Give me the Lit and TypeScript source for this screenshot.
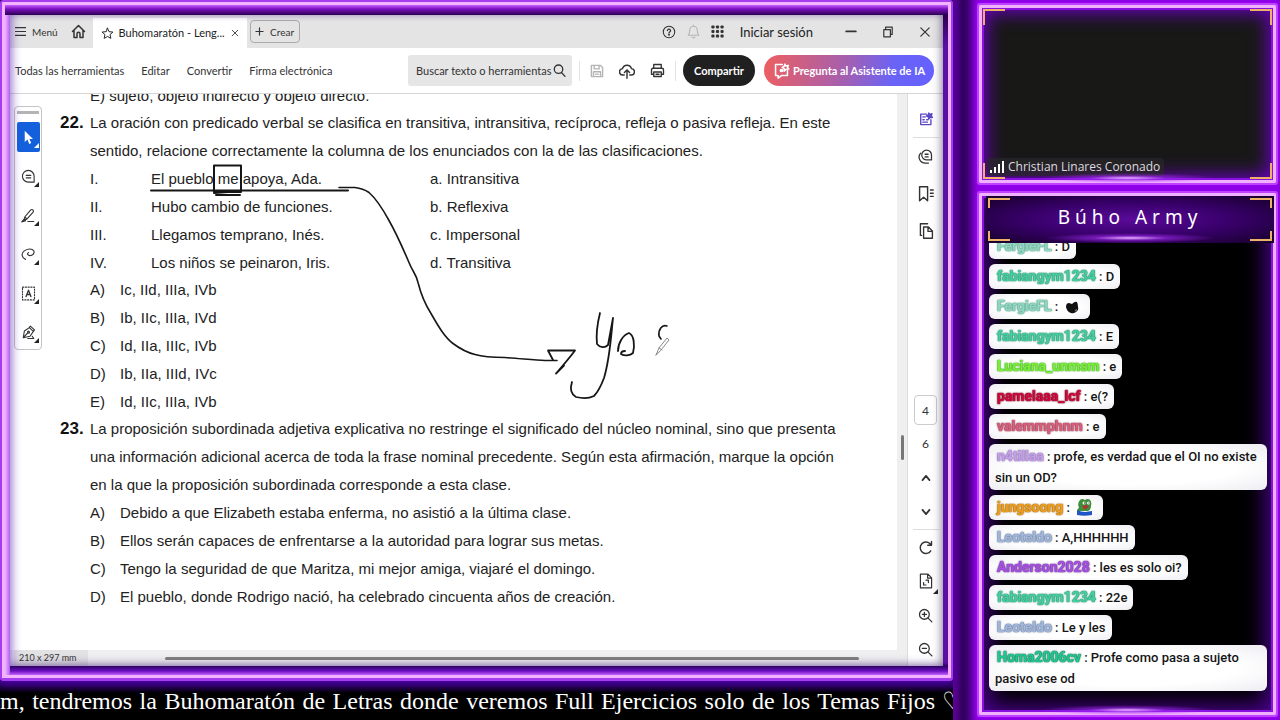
import { LitElement, html, css, svg, nothing } from "lit";
import { customElement } from "lit/decorators.js";
import { styleMap } from "lit/directives/style-map.js";

const icon = (size: number, body: unknown, sw = 1.5) => html`<svg
  width=${size} height=${size} viewBox="0 0 20 20" fill="none" stroke="currentColor"
  stroke-width=${sw} stroke-linecap="round" stroke-linejoin="round" aria-hidden="true">${body}</svg>`;

const I = {
  menu: svg`<path d="M0 3h20M0 10h20M0 17h20" stroke-width="2.200"/>`,
  home: svg`<path d="M2 10 10 2l8 8M4 8.500V18h4v-5a2 2 0 0 1 4 0v5h4V8.500" stroke-width="2"/>`,
  star: svg`<path d="m10 1.800 2.400 5.400 5.900.6-4.400 3.900 1.300 5.800L10 14.500l-5.200 3 1.300-5.800L1.700 7.800l5.900-.6z"/>`,
  plus: svg`<path d="M10 2v16M2 10h16" stroke-width="2.600"/>`,
  help: svg`<circle cx="10" cy="10" r="8.200"/><path d="M7.800 8a2.200 2.200 0 1 1 3.200 2c-.8.4-1 .8-1 1.600" stroke-width="1.800"/><circle cx="10" cy="14" r=".6" fill="currentColor"/>`,
  bell: svg`<path d="M3 15c2-2 2-3 2-7a5 5 0 0 1 10 0c0 4 0 5 2 7zM8 17.500c.6 1.400 3.400 1.400 4 0M10 1.500V3"/>`,
  apps: svg`${[3, 10, 17].map((x) => [3, 10, 17].map((y) => svg`<rect x=${x - 2.4} y=${y - 2.4} width="4.800" height="4.800" rx="1.500" fill="currentColor"/>`))}`,
  min: svg`<path d="M2 9h16" stroke-width="3"/>`,
  restore: svg`<path d="M3 6h11v12H3zM6 6V2h11v12h-3" stroke-width="2"/>`,
  close: svg`<path d="m3 3 14 14M17 3 3 17" stroke-width="2"/>`,
  search: svg`<circle cx="8.500" cy="8" r="6.500"/><path d="m13 13 5.500 6"/>`,
  save: svg`<path d="M2 2h13l3 3v13H2zM6 2v5h7V2M5 18v-7h10v7M8 14.500h4"/>`,
  upload: svg`<path d="M6.500 15H5a4 4 0 0 1-.6-8A5.800 5.800 0 0 1 15.600 7 4 4 0 0 1 15 15h-1.500M10 19V9M6.800 12 10 8.600l3.200 3.400"/>`,
  print: svg`<path d="M5 7V2h10v5M5 15H2V9q0-2 2-2h12q2 0 2 2v6h-3M5 12h10v6H5zM8 15h4"/>`,
  ai: svg`<path d="M11 3H3v13h3v3l4-3h7V10M9 9.500v1.500M13 9.500v1.500M14 2.500l1.200 2.300 2.800-.8-1 2.600 1.600 1.600-3.200.2-1.600 2-.8-2.800-2.200-1.200 2.400-1.400z"/><circle cx="10" cy="10" r="1.300" fill="currentColor"/>`,
  cursor: svg`<path d="M5 1v15l3.600-3.200L11 18.500l2.600-1.200-2.400-5.300H16z" fill="currentColor" stroke="none"/>`,
  comment: svg`<path d="M17.500 17.500H10A7.800 7.800 0 1 1 17.500 10zM7 8.500h6M7 11.800h6"/>`,
  marker: svg`<path d="m5 12 8-9.500q1.500-1 3 .2 1.200 1.300.2 2.800l-8.400 9.200zM5 12l-1 4.500 4-2M9 18h8"/><path d="M1 18.500 4 15l2 2z" fill="currentColor"/>`,
  lasso: svg`<path d="M6 16.500C1 14.500 0 9 4 5.500 8 2 15 1.500 17 5c1.500 3-1.500 6.500-5 6.500-3 0-4.500-2.500-2-4"/>`,
  text: svg`<rect x="2" y="1.500" width="16" height="17" stroke-dasharray="1.500 2.200"/><path d="m6.800 14 3.200-8.500L13.200 14M8 11.300h4" stroke-width="1.800"/>`,
  pen: svg`<path d="m3 17 1.500-9L11 3.500l5.500 5L12 15zM3 17l6-6.500M11 3.500l1.500-2 5.500 5-1.500 2M9 18h8l-2-3"/><circle cx="10" cy="9.500" r="1.300"/>`,
  summary: svg`<path d="M11 3H2.500v15H17v-7M5.500 7H9M5.500 11h2M11 11h2M5.500 14.500H12"/><path d="m14 1.500 1.400 2 3.100-1-1 3 1.600 2.300-3.200.2-2 2-.7-3-2.500-1.500 2.700-1.500z" fill="currentColor"/>`,
  comments: svg`<path d="M18 14.500H12A6.500 6.500 0 1 1 18 8zM9.500 7h4M9.500 10.500h4M3.500 5.500A8 8 0 0 0 9.500 18.800H14"/>`,
  bookmark: svg`<path d="M2 1h10v17.500l-5-4.500-5 4.500zM15.500 5H19M15.500 9H19M15.500 13H19" stroke-width="1.800"/>`,
  pages: svg`<path d="M4.500 15.500H3V1h9M7 5h6l5 5v9H7zM12.500 5v5.500H18" stroke-width="1.700"/>`,
  up: svg`<path d="m5 13 5-6 5 6" stroke-width="2.600"/>`,
  down: svg`<path d="m5 7 5 6 5-6" stroke-width="2.600"/>`,
  rotate: svg`<path d="M17 14.500A7.600 7.600 0 1 1 16 5l1.500 1.500M18 2v5h-5" stroke-width="1.900"/>`,
  fit: svg`<path d="M3 1.500h9.500L17 6v12.500H3zM12 2v4.500h4.500M7 15v-3M7 15h3M13 9v3M13 9h-3"/>`,
  zin: svg`<circle cx="8.500" cy="8.500" r="6.500"/><path d="m13.500 13.500 5 5M5.800 8.500h5.400M8.500 5.800v5.400"/>`,
  zout: svg`<circle cx="8.500" cy="8.500" r="6.500"/><path d="m13.500 13.500 5 5M5.800 8.500h5.400"/>`,
};

const ui = css`Lato, "Liberation Sans", sans-serif`;

@customElement("pdf-reader")
class PdfReader extends LitElement {
  static styles = css`
    :host { display: flex; flex-direction: column; min-height: 0; position: relative; background: #fff; color: #333; font: 11px/16px ${ui}; }
    :host::after { content: ""; position: absolute; inset: 0; pointer-events: none; box-shadow: inset 5px 0 8px -2px rgba(110, 60, 190, .55), inset -5px 0 8px -3px rgba(60, 40, 90, .5), inset 0 -7px 8px -4px rgba(60, 30, 100, .3); }
    button { font: inherit; color: inherit; background: none; border: 0; padding: 0; display: flex; align-items: center; justify-content: center; flex: none; white-space: nowrap; }
    svg { display: block; flex: none; }
    .tabs { display: flex; align-items: center; height: 33px; background: #e4e4e4; flex: none; }
    .menu { gap: 6px; padding-left: 5px; font-size: 10px; }
    .home { padding: 0 7px 0 13px; }
    .tab { display: flex; align-items: center; align-self: flex-end; height: 30px; width: 154px; background: #fff; box-sizing: border-box; padding: 0 8px; gap: 5px; color: #222; }
    .tab .name { flex: 1; white-space: nowrap; overflow: hidden; }
    .create { margin-left: 3px; border: 1px solid #aaa; border-radius: 4px; height: 23px; width: 50px; gap: 6px; font-size: 10px; }
    .win { margin-left: auto; display: flex; align-items: center; padding-right: 12px; color: #333; }
    .win .sign { font-size: 13px; color: #222; margin: 0 32px 0 16px; }
    .gap { margin-right: 10px; }
    .wide { margin-right: 25px; }
    .faint { color: #b4b4b4; }
    .bar { display: flex; align-items: center; height: 46px; box-sizing: border-box; padding: 0 9px 0 5px; border-bottom: 1px solid #d6d6d6; flex: none; }
    nav { display: flex; gap: 17px; }
    nav a { color: #333; text-decoration: none; white-space: nowrap; }
    .find { margin-left: auto; display: flex; align-items: center; width: 164px; box-sizing: border-box; height: 31px; padding: 0 6px 0 8px; background: #e6e6e6; border-radius: 3px; }
    .find input { flex: 1; min-width: 0; font: 11px/16px ${ui}; color: #333; background: none; border: 0; padding: 0; outline: 0; }
    .find input::placeholder { color: #333; opacity: 1; }
    .hid { position: absolute; width: 1px; height: 1px; overflow: hidden; clip-path: inset(50%); }
    .acts { display: flex; gap: 15px; margin: 0 7px; padding: 2px 10px; border: solid #e2e2e2; border-width: 0 1px; }
    .share { width: 72px; height: 31px; border-radius: 16px; background: #202020; color: #fff; font-weight: 700; }
    .ask { margin-left: 9px; width: 170px; height: 31px; border-radius: 16px; gap: 3px; color: #fff; font-weight: 700; background: linear-gradient(100deg, #ee5f5f, #a45fb0 48%, #6a63f6 75%, #6560ff); }
    .work { display: flex; flex: 1; min-height: 0; }
    .view { flex: 1; min-width: 0; display: flex; flex-direction: column; }
    .page { flex: 1; min-height: 0; display: flex; overflow: hidden; position: relative; }
    .tools { margin: 12px 0 0 4px; width: 28px; box-sizing: border-box; border: 1px solid #c4c4c4; border-radius: 4px; align-self: flex-start; display: flex; flex-direction: column; align-items: center; flex: none; padding: 4px 0 2px; gap: 9px; }
    .grip { width: 22px; height: 3px; background: #b4b4b4; margin-bottom: -1px; }
    .tools button { width: 23px; height: 30px; position: relative; }
    .tools button::after, .rail .more::after { content: ""; position: absolute; right: 1px; bottom: 4px; border: solid transparent; border-width: 0 0 5px 5px; border-bottom-color: #222; }
    .tools .on { background: #1460dc; color: #fff; border-radius: 2px; }
    .tools .on::after { border-bottom-color: #fff; }
    .doc { flex: 1; min-width: 0; margin: -12px 0 0 18px; padding-right: 69px; font: 15px/28px "Liberation Sans", sans-serif; color: #222; }
    p, ol, table { margin: 0; padding: 0; }
    .q { display: grid; grid-template-columns: 30px 1fr; }
    .prev { line-height: 27px; }
    .q > b { color: #111; font-size: 17px; }
    .body { min-width: 0; }
    .ln { display: block; white-space: nowrap; }
    .full { text-align-last: justify; }
    table { border-collapse: collapse; line-height: 27px; }
    td { padding: 0 0 1px; white-space: nowrap; }
    tr:last-child td { padding-bottom: 0; }
    .rn { width: 61px; } .st { width: 279px; }
    ol { list-style: none; display: grid; gap: 1px; line-height: 27px; }
    li { display: grid; grid-template-columns: 30px 1fr; white-space: nowrap; }
    .ink { position: absolute; left: 0; top: 0; }
    .foot { display: flex; align-items: center; height: 16px; background: #efeef0; flex: none; }
    .size { width: 74px; margin-left: 4px; padding-left: 5px; box-sizing: border-box; background: #e2e1e3; font-size: 9px; white-space: nowrap; }
    .hthumb { flex: 1; margin: 0 38px 0 77px; height: 3px; border-radius: 2px; background: #808080; }
    .vbar { width: 10px; background: #efefef; border-right: 1px solid #ddd; display: flex; flex-direction: column; align-items: center; flex: none; }
    .vthumb { width: 3px; height: 25px; margin-top: 341px; border-radius: 2px; background: #777; }
    .rail { width: 35px; display: flex; flex-direction: column; align-items: center; flex: none; }
    .rail button { width: 26px; height: 37px; position: relative; }
    .rail .first { margin-top: 6px; color: #5a48c8; }
    .low { margin-top: auto; display: flex; flex-direction: column; align-items: center; font-size: 12px; }
    .rail .low button, .low output { height: 34px; display: flex; align-items: center; }
    .low .cur { width: 23px; height: 30px; margin: 2px 0; box-sizing: border-box; text-align: center; border: 1px solid #ccc; border-radius: 4px; padding: 0; background: #fff; color: #333; font: 12px/16px ${ui}; }
    .sep { width: 26px; height: 1px; background: #ddd; }
  `;

  render() {
    const tools: [string, unknown][] = [["Seleccionar", I.cursor], ["Comentar", I.comment], ["Resaltar", I.marker], ["Dibujar", I.lasso], ["Texto", I.text], ["Firmar", I.pen]];
    const rows = [
      ["I.", "El pueblo me apoya, Ada.", "a. Intransitiva"],
      ["II.", "Hubo cambio de funciones.", "b. Reflexiva"],
      ["III.", "Llegamos temprano, Inés.", "c. Impersonal"],
      ["IV.", "Los niños se peinaron, Iris.", "d. Transitiva"],
    ];
    const opts = (list: string[]) => html`<ol>${list.map((t, i) => html`<li><span>${"ABCDE"[i]})</span><span>${t}</span></li>`)}</ol>`;
    return html`
      <div class="tabs">
        <button class="menu">${icon(11, I.menu)}Menú</button>
        <button class="home" aria-label="Inicio">${icon(15, I.home)}</button>
        <div class="tab">${icon(13, I.star)}<span class="name">Buhomaratón - Leng...</span><button aria-label="Cerrar pestaña">${icon(8, I.close, 2)}</button></div>
        <button class="create">${icon(9, I.plus)}Crear</button>
        <div class="win">
          <button class="gap" aria-label="Ayuda">${icon(14, I.help)}</button>
          <button class="gap faint" aria-label="Avisos">${icon(15, I.bell)}</button>
          <button aria-label="Aplicaciones">${icon(13, I.apps, 0)}</button>
          <button class="sign">Iniciar sesión</button>
          <button class="wide" aria-label="Minimizar">${icon(12, I.min)}</button>
          <button class="wide" aria-label="Restaurar">${icon(12, I.restore)}</button>
          <button aria-label="Cerrar">${icon(12, I.close)}</button>
        </div>
      </div>
      <div class="bar">
        <nav><a href="#t">Todas las herramientas</a><a href="#e">Editar</a><a href="#c">Convertir</a><a href="#f">Firma electrónica</a></nav>
        <div class="find"><label class="hid" for="q">Buscar</label><input id="q" placeholder="Buscar texto o herramientas" />${icon(13, I.search, 2)}</div>
        <div class="acts">
          <button class="faint" aria-label="Guardar">${icon(14, I.save, 2)}</button>
          <button aria-label="Subir">${icon(16, I.upload, 1.8)}</button>
          <button aria-label="Imprimir">${icon(15, I.print, 1.8)}</button>
        </div>
        <button class="share">Compartir</button>
        <button class="ask">${icon(17, I.ai, 1.8)}Pregunta al Asistente de IA</button>
      </div>
      <div class="work">
        <div class="view">
          <div class="page">
            <div class="tools"><span class="grip"></span>${tools.map(([l, g], i) => html`<button class=${i ? "" : "on"} aria-label=${l}>${icon(15, g)}</button>`)}</div>
            <article class="doc">
              <div class="q prev"><span></span><span class="ln">E) sujeto, objeto indirecto y objeto directo.</span></div>
              <div class="q"><b>22.</b><div class="body">
                <p><span class="ln full">La oración con predicado verbal se clasifica en transitiva, intransitiva, recíproca, refleja o pasiva refleja. En este</span>
                <span class="ln">sentido, relacione correctamente la columna de los enunciados con la de las clasificaciones.</span></p>
                <table>${rows.map((r) => html`<tr><td class="rn">${r[0]}</td><td class="st">${r[1]}</td><td>${r[2]}</td></tr>`)}</table>
                ${opts(["Ic, IId, IIIa, IVb", "Ib, IIc, IIIa, IVd", "Id, IIa, IIIc, IVb", "Ib, IIa, IIId, IVc", "Id, IIc, IIIa, IVb"])}
              </div></div>
              <div class="q"><b>23.</b><div class="body">
                <p><span class="ln full">La proposición subordinada adjetiva explicativa no restringe el significado del núcleo nominal, sino que presenta</span>
                <span class="ln full">una información adicional acerca de toda la frase nominal precedente. Según esta afirmación, marque la opción</span>
                <span class="ln">en la que la proposición subordinada corresponde a esta clase.</span></p>
                ${opts(["Debido a que Elizabeth estaba enferma, no asistió a la última clase.", "Ellos serán capaces de enfrentarse a la autoridad para lograr sus metas.", "Tengo la seguridad de que Maritza, mi mejor amiga, viajaré el domingo.", "El pueblo, donde Rodrigo nació, ha celebrado cincuenta años de creación."])}
              </div></div>
            </article>
            <svg class="ink" width="700" height="320" viewBox="10 94 700 320" fill="none" stroke="#161616" stroke-width="2" stroke-linecap="round" stroke-linejoin="round" aria-hidden="true">
              <path d="M151 190.500H348M214 165.500H241V192H214zM214 193l14-1M216 195h24"/>
              <path d="M339 187.500h16q8 1 14 5c8 7 14 17 20 28 8 14 14 28 20 42 4 10 7 11 9 20 3 12 6 20 13 31 8 14 14 24 22 30 8 6 14 9 22 11 10 3 20 3 30 3 16 1 30 3 40 3l12 0" stroke-width="1.600"/>
              <path d="m553 360-5-9.500h27c-6 8-12 15-19 23l8-8" stroke-width="1.800"/>
              <path d="M600 313c-2 8-4 22-3 31 3 4 8 4 11 1l5-27c-2 18-3 40-9 60-3 8-6 14-10 18-6 3-14 2-18 1-5-3-6-9-4-15M618 351c0-8 5-16 11-18 5 2 6 12 4 20-3 3-9 3-12 1 0-3 2-3 4-3" stroke-width="1.800"/>
              <path d="M667 326c-5-2-9 4-8 10l2 3" stroke-width="1.600"/><path d="m656 355 3-7 8-10 2 2-8 10zM659 348l3 2" stroke="#888" stroke-width="1"/>
            </svg>
          </div>
          <div class="foot"><span class="size">210 x 297 mm</span><span class="hthumb"></span></div>
        </div>
        <div class="vbar"><span class="vthumb"></span></div>
        <div class="rail">
          <button class="first" aria-label="Resumen">${icon(14, I.summary, 2)}</button><span class="sep"></span>
          <button aria-label="Comentarios">${icon(15, I.comments, 1.7)}</button>
          <button aria-label="Marcadores">${icon(16, I.bookmark)}</button>
          <button aria-label="Páginas">${icon(16, I.pages)}</button>
          <div class="low">
            <label class="hid" for="pg">Página</label><input id="pg" class="cur" value="4" /><output>6</output>
            <button aria-label="Anterior">${icon(14, I.up)}</button><button aria-label="Siguiente">${icon(14, I.down)}</button><span class="sep"></span>
            <button aria-label="Girar">${icon(15, I.rotate)}</button><button class="more" aria-label="Ajustar">${icon(16, I.fit)}</button>
            <button aria-label="Acercar">${icon(15, I.zin, 1.7)}</button><button aria-label="Alejar">${icon(15, I.zout, 1.7)}</button>
          </div>
        </div>
      </div>`;
  }
}

interface Msg { who: string; fill: string; edge: string; text?: string; emote?: string }
const green = { fill: "#45d0a0", edge: "#2c8a70" };
const mint = { fill: "#93d8c2", edge: "#4f9c86" };
const steel = { fill: "#a4b8dc", edge: "#66789c" };
const MESSAGES: Msg[] = [
  { who: "FergieFL", ...mint, text: "D" },
  { who: "fabiangym1234", ...green, text: "D" },
  { who: "FergieFL", ...mint, emote: "cat" },
  { who: "fabiangym1234", ...green, text: "E" },
  { who: "Luciana_unmsm", fill: "#7df03a", edge: "#3fa51c", text: "e" },
  { who: "pamelaaa_lcf", fill: "#d0083c", edge: "#7c1030", text: "e(?" },
  { who: "valemmphnm", fill: "#d8607c", edge: "#96405a", text: "e" },
  { who: "n4tillaa", fill: "#c8a0e8", edge: "#8870b0", text: "profe, es verdad que el OI no existe sin un OD?" },
  { who: "jungsoong", fill: "#f0a020", edge: "#a06818", emote: "frog" },
  { who: "Leoteldo", ...steel, text: "A,HHHHHH" },
  { who: "Anderson2028", fill: "#a850e0", edge: "#6c3898", text: "les es solo oi?" },
  { who: "fabiangym1234", ...green, text: "22e" },
  { who: "Leoteldo", ...steel, text: "Le y les" },
  { who: "Homa2006cv", fill: "#20c890", edge: "#18785c", text: "Profe como pasa a sujeto pasivo ese od" },
];

@customElement("chat-feed")
class ChatFeed extends LitElement {
  static styles = css`
    :host { display: flex; flex-direction: column; justify-content: flex-end; align-items: flex-start; gap: 5px; overflow: hidden; font: 500 13px/21px Roboto, sans-serif; color: #151515; }
    .msg { box-sizing: border-box; max-width: 100%; padding: 2px 6px; background: radial-gradient(ellipse at center, #fff 55%, #eeedf2); border-radius: 6px; flex: none; overflow-wrap: anywhere; }
    .who { font-weight: 700; padding-left: 2px; font-size: 14px; line-height: 20px; }
    .emote { display: inline-block; vertical-align: -4px; margin: 0 4px 0 3px; }
  `;
  emote(kind?: string) {
    if (!kind) return nothing;
    return kind === "cat"
      ? html`<svg class="emote" width="15" height="16" viewBox="0 0 15 16"><path d="M1 8q0-4 3-4l3 1q3-3 5-2 1 2 1 5 1 3-2 5-3 2-5 1-4-1-5-6z" fill="#111"/><path d="m10 11 2-1-1 3z" fill="#999"/></svg>`
      : html`<svg class="emote" width="17" height="18" viewBox="0 0 17 18"><path d="M1 13q0-2 2-3Q1 5 4 2q2-2 5 0 3-2 5 0 2 2 1 6 0 4-3 5z" fill="#3f8f3a"/><path d="M1 12q4 2 8 2l7-1v4q-8 1.500-15 0z" fill="#1f55c4"/><path d="M6 8q4-2 7 0-2 4-5 3z" fill="#a83a34"/><circle cx="8" cy="5" r="1.500" fill="#fff"/><circle cx="12.500" cy="5" r="1.500" fill="#fff"/><path d="M8 5h1M12.500 5h1" stroke="#111"/></svg>`;
  }
  render() {
    return MESSAGES.map((m) => html`<div class="msg"><span class="who" style=${styleMap({ color: m.fill, textShadow: `0 0 1px ${m.edge}, 0 0 1px ${m.edge}, 0 0 2px ${m.edge}` })}>${m.who}</span> : ${m.text ?? nothing}${this.emote(m.emote)}</div>`);
  }
}

@customElement("app-root")
class AppRoot extends LitElement {
  static styles = css`
    :host { display: grid; grid-template-columns: minmax(0, 1fr) 327px; height: 100vh; overflow: hidden; background: #000; }
    .left { display: flex; flex-direction: column; min-width: 0; min-height: 0; }
    .frame { flex: 1; min-height: 0; display: flex; border: 2px solid #a63cf0; border-bottom-width: 3px; border-radius: 3px; background: #f3b4ff; padding: 3px; z-index: 1; box-shadow: 0 2px 8px 2px #4b00a0; }
    .bevel { flex: 1; min-width: 0; display: flex; box-sizing: border-box; padding: 10px 5px 9px 5px;
      background: linear-gradient(90deg, #f3b4ff, #b060f0 5px, transparent 5px) 0 10px no-repeat, linear-gradient(180deg, #c860ff, #7a10c0 4px, #2c0050 10px, #5a10a0 40px, #5a10a0 calc(100% - 12px), #2c0060 calc(100% - 9px), #6a10c0 calc(100% - 4px), #c860ff); }
    pdf-reader { flex: 1; min-width: 0; }
    .ticker { height: 39px; flex: none; display: flex; gap: 7px; background: linear-gradient(#30006e, #000 12px); color: #fff; overflow: hidden; white-space: nowrap; font: 24px/40px "Liberation Serif", serif; }
    .news { flex: 1; text-align-last: justify; }
    .heart { width: 11px; }
    .right { display: flex; flex-direction: column; gap: 6px; padding: 3px 2px 3px 24px; min-width: 0; min-height: 0; background: linear-gradient(90deg, #62009c, #30005c 10px, #3c0070 14px, #8a00e0 24px, #8a00e0); }
    .neon { border: 2px solid #c040ff; padding: 6px; border-radius: 3px; box-sizing: border-box; display: flex; flex-direction: column; }
    .cam { height: 182px; flex: none; position: relative; background: #181817; box-shadow: 0 0 5px #a000ff, inset 0 0 0 3px #efb0ff, inset 0 0 0 5px #8a10e0, inset 0 0 18px 8px #6a00c0; }
    .corners { position: absolute; inset: 4px; pointer-events: none;
      --g: linear-gradient(#efb068, #efb068);
      background: var(--g) 0 0 / 22px 2px, var(--g) 0 0 / 2px 16px, var(--g) 100% 0 / 22px 2px, var(--g) 100% 0 / 2px 16px, var(--g) 0 100% / 22px 2px, var(--g) 0 100% / 2px 16px, var(--g) 100% 100% / 22px 2px, var(--g) 100% 100% / 2px 16px; background-repeat: no-repeat; }
    h1 .corners { inset: 2px; background-size: 22px 2px, 2px 10px; }
    .name { margin: auto 0 1px 2px; align-self: flex-start; display: flex; gap: 4px; align-items: center; padding: 0 4px 0 3px; border-radius: 4px; background: rgba(40, 40, 40, .7); color: #ddd; font: 12px/18px "Open Sans", sans-serif; white-space: nowrap; }
    .chat { flex: 1; min-height: 0; background: #000; box-shadow: 0 0 5px #a000ff, inset 0 0 0 3px #efb0ff, inset 0 0 0 5px #8a10e0, inset 0 0 22px 10px #4c0090; padding: 3px 2px 24px 7px; position: relative; }
    h1 { margin: 0; height: 47px; padding-bottom: 5px; box-sizing: border-box; flex: none; position: relative; display: flex; align-items: center; justify-content: center; background: radial-gradient(ellipse at center, #5a0a9a, #38006a 50%, #16002a); color: #fff; font: 400 19px/24px "Noto Sans", sans-serif; letter-spacing: 5px; }
    .glow { position: absolute; left: 20%; right: 20%; bottom: 0; height: 10px; background: radial-gradient(ellipse at center, #e8b0ff, rgba(160, 40, 240, .6) 30%, transparent 70%); }
    chat-feed { flex: 1; min-height: 0; margin: 0 7px 0 3px; }
  `;
  render() {
    return html`
      <main class="left">
        <div class="frame"><div class="bevel"><pdf-reader></pdf-reader></div></div>
        <div class="ticker"><span class="news">m, tendremos la Buhomaratón de Letras donde veremos Full Ejercicios solo de los Temas Fijos</span><span class="heart">♡</span></div>
      </main>
      <aside class="right">
        <section class="neon cam">
          <div class="name"><svg width="14" height="12" viewBox="0 0 14 12" aria-hidden="true"><path d="M1 12V9M5 12V6M9 12V3M13 12V0" stroke="#fff" stroke-width="2"/></svg>Christian Linares Coronado</div>
          <span class="corners"></span><span class="glow"></span>
        </section>
        <section class="neon chat">
          <h1>Búho Army<span class="corners"></span><span class="glow"></span></h1>
          <chat-feed></chat-feed>
          <span class="glow"></span>
        </section>
      </aside>`;
  }
}
